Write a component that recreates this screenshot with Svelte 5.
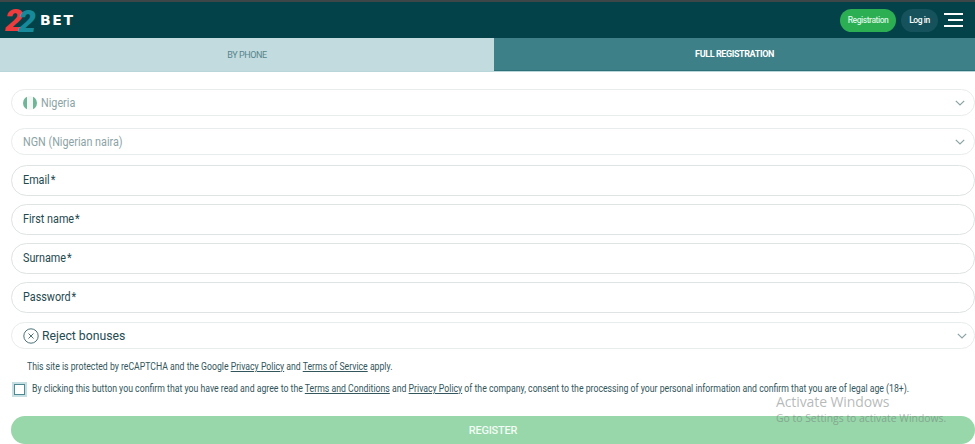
<script>
  const fields = ['Email', 'First name', 'Surname', 'Password'];
</script>

<style>
  :global(body) {
    margin: 0;
    font-family: Roboto, Arial, sans-serif;
    background: #fff;
  }
  .page {
    position: relative;
    height: 444px;
    overflow: hidden;
  }
  .header {
    display: flex;
    align-items: center;
    height: 36px;
    border-top: 2px solid #3f4648;
    background: #04424a;
  }
  .logo {
    display: flex;
    align-items: center;
    margin-left: 5px;
  }
  .two {
    display: block;
    font-size: 32px;
    line-height: 28px;
    font-weight: 900;
    font-style: italic;
  }
  .red { color: #ee3b3b; }
  .teal { color: #16899a; margin-left: -5px; margin-top: 2px; }
  .bet {
    margin-left: 4px;
    color: #fff;
    font-family: "DejaVu Sans", sans-serif;
    font-size: 14px;
    font-weight: 700;
    letter-spacing: 1.6px;
  }
  .actions {
    display: flex;
    align-items: center;
    margin-left: auto;
    margin-right: 12px;
  }
  .btn {
    display: flex;
    align-items: center;
    justify-content: center;
    height: 23px;
    border-radius: 12px;
    font-size: 8.5px;
    font-weight: 500;
    letter-spacing: -0.45px;
    color: #fff;
  }
  .reg {
    width: 56px;
    background: #2cae53;
    color: #d9f5e1;
  }
  .login {
    width: 37px;
    margin-left: 5px;
    background: #15525b;
  }
  .burger {
    display: flex;
    flex-direction: column;
    align-items: flex-end;
    gap: 4px;
    width: 19px;
    margin-left: 6px;
  }
  .burger span {
    display: block;
    width: 19px;
    height: 2px;
    background: #fff;
  }
  .burger span:nth-child(2) {
    width: 15px;
  }
  .tabs {
    display: flex;
    height: 33px;
    border-bottom: 1px solid #b9d6da;
  }
  .tab {
    display: flex;
    align-items: center;
    justify-content: center;
    width: 494px;
    font-size: 9px;
    letter-spacing: -0.4px;
    background: #c1dbde;
    color: #58858c;
  }
  .tab.active {
    flex: 1;
    background: #3d8087;
    color: #fff;
    font-weight: 700;
    border-bottom: 1px solid #2f7179;
  }
  .form {
    display: flex;
    flex-direction: column;
    padding: 17px 0 0 11px;
  }
  .field {
    display: flex;
    align-items: center;
    box-sizing: border-box;
    border: 1.5px solid #e9ecec;
    border-radius: 16px;
    background: #fff;
    color: #1f4a50;
    font-size: 12px;
    padding-left: 11px;
  }
  .label {
    display: inline-block;
    white-space: nowrap;
    transform: scaleX(0.9);
    transform-origin: left center;
  }
  .star {
    margin-left: 1px;
  }
  .select {
    height: 27px;
    margin-bottom: 12px;
    color: #8ca3a6;
  }
  .select.second {
    margin-bottom: 10px;
  }
  .input {
    height: 31px;
    margin-bottom: 8px;
    padding-bottom: 2px;
    border-color: #dfe3e3;
  }
  .flag {
    width: 14px;
    height: 14px;
    margin-right: 4px;
    border-radius: 50%;
    background: linear-gradient(90deg, #6fb598 0 32%, #f4f7f5 32% 68%, #6fb598 68%);
  }
  .chev {
    margin-left: auto;
    margin-right: 9px;
  }
  .bonus {
    height: 27px;
    margin-top: 1px;
    color: #254b52;
    font-size: 13px;
  }
  .bonus .label {
    transform: scaleX(0.94);
  }
  .bonus svg:first-child {
    margin-right: 3px;
  }
  .bonus .chev {
    margin-right: 7px;
  }
  .note {
    margin: 11px 0 0 16px;
    font-size: 10.2px;
    line-height: 14px;
    color: #33565c;
    white-space: nowrap;
    transform: scaleX(0.853);
    transform-origin: left center;
  }
  a {
    color: #33565c;
    text-decoration: underline;
  }
  .agree {
    display: flex;
    align-items: center;
    margin: 8px 0 0 3px;
    font-size: 10.2px;
    line-height: 14px;
    color: #33565c;
  }
  .agree-text {
    white-space: nowrap;
    transform: scaleX(0.855);
    transform-origin: left center;
  }
  .check {
    box-sizing: border-box;
    flex: none;
    width: 11px;
    height: 11px;
    margin-right: 7px;
    border: 1px solid #4f8a92;
    outline: 2px solid #c6dfe2;
    background: #fff;
  }
  .submit {
    display: flex;
    align-items: center;
    justify-content: center;
    height: 28px;
    margin-top: 20px;
    border-radius: 14px;
    background: #97d7a9;
    color: #f2fbf5;
    font-size: 11px;
    font-weight: 500;
    letter-spacing: -0.2px;
  }
  .watermark {
    position: absolute;
    left: 776px;
    top: 393px;
    font-family: "Open Sans", sans-serif;
    color: rgba(110, 115, 115, 0.5);
  }
  .watermark div:first-child {
    font-size: 14px;
    line-height: 18px;
    letter-spacing: -0.1px;
  }
  .watermark div:last-child {
    margin-top: 0;
    font-size: 10.4px;
    line-height: 14px;
  }
</style>

{#snippet chevron()}
  <svg class="chev" width="10" height="6" viewBox="0 0 10 6" fill="none" stroke="#8ba3a6" stroke-width="1.2"><path d="M.8.8L5 5 9.2.8"/></svg>
{/snippet}

<div class="page">
  <header class="header">
    <div class="logo">
      <span class="two red">2</span>
      <span class="two teal">2</span>
      <span class="bet">BET</span>
    </div>
    <div class="actions">
      <div class="btn reg">Registration</div>
      <div class="btn login">Log in</div>
      <div class="burger"><span></span><span></span><span></span></div>
    </div>
  </header>

  <div class="tabs">
    <div class="tab">BY PHONE</div>
    <div class="tab active">FULL REGISTRATION</div>
  </div>

  <div class="form">
    <div class="field select"><span class="flag"></span><span class="label">Nigeria</span>{@render chevron()}</div>
    <div class="field select second"><span class="label">NGN (Nigerian naira)</span>{@render chevron()}</div>
    {#each fields as f}
      <div class="field input"><span class="label">{f}<span class="star">*</span></span></div>
    {/each}
    <div class="field bonus">
      <svg width="16" height="16" viewBox="0 0 16 16" fill="none" stroke="#4f7379" stroke-width="1"><circle cx="8" cy="8" r="7.2"/><path d="M5.5 5.5l5 5M10.5 5.5l-5 5"/></svg>
      <span class="label">Reject bonuses</span>{@render chevron()}
    </div>
    <p class="note">This site is protected by reCAPTCHA and the Google <a href="#p">Privacy Policy</a> and <a href="#t">Terms of Service</a> apply.</p>
    <div class="agree">
      <span class="check"></span>
      <span class="agree-text">By clicking this button you confirm that you have read and agree to the <a href="#c">Terms and Conditions</a> and <a href="#p">Privacy Policy</a> of the company, consent to the processing of your personal information and confirm that you are of legal age (18+).</span>
    </div>
    <div class="submit">REGISTER</div>
  </div>

  <div class="watermark">
    <div>Activate Windows</div>
    <div>Go to Settings to activate Windows.</div>
  </div>
</div>
